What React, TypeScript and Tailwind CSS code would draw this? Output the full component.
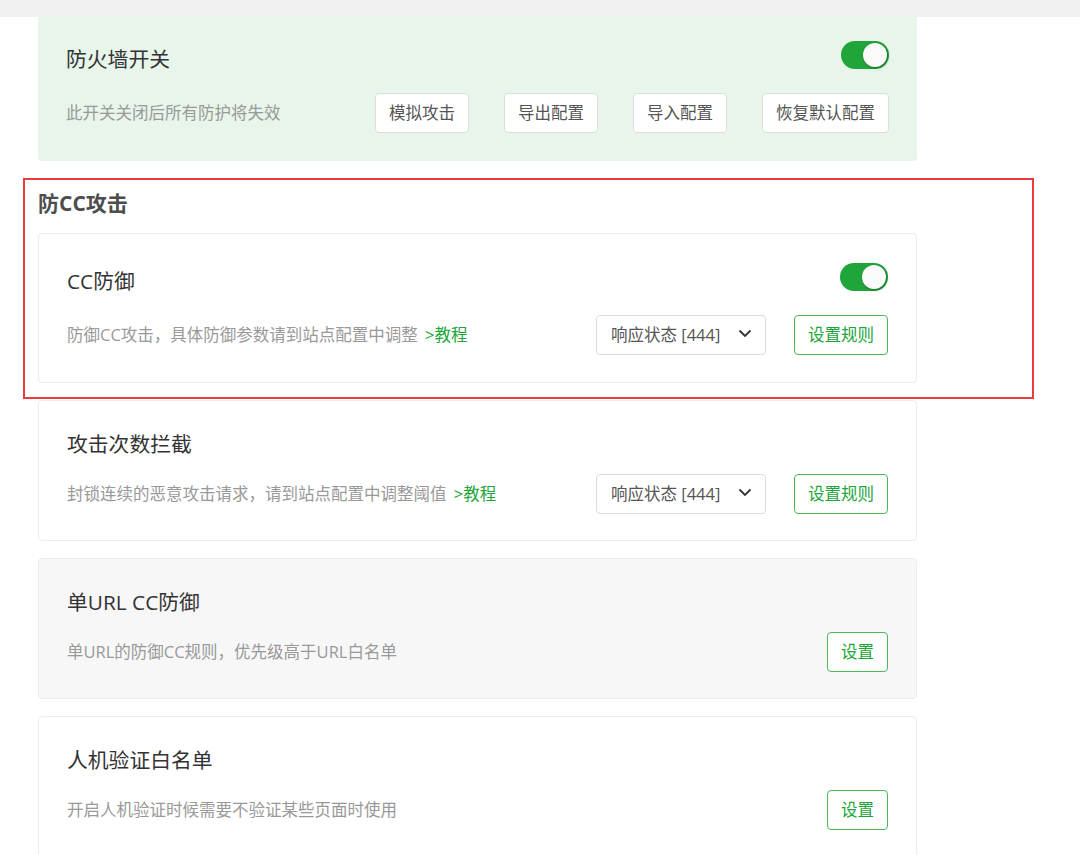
import React from "react";

const FONT = { fontFamily: '"Open Sans", "Noto Sans CJK SC", sans-serif' };

function Toggle() {
  return (
    <div className="relative h-[28px] w-[48px] shrink-0 rounded-full bg-[#20a53a]">
      <div className="absolute right-[2px] top-[2px] h-[24px] w-[24px] rounded-full bg-[#fafafa] shadow-[1px_1px_3px_rgba(0,0,0,0.35)]" />
    </div>
  );
}

function PlainButton({ children }: { children: React.ReactNode }) {
  return (
    <button className="h-[40px] shrink-0 rounded-[4px] border border-[#dcdcdc] bg-white px-[13px] text-[16.5px] text-[#555]">
      {children}
    </button>
  );
}

function GreenButton({ children }: { children: React.ReactNode }) {
  return (
    <button className="h-[40px] shrink-0 rounded-[4px] border border-[#4cb85c] bg-white px-[13px] text-[16.5px] text-[#20a53a]">
      {children}
    </button>
  );
}

function StatusSelect() {
  return (
    <div className="flex h-[40px] w-[170px] shrink-0 items-center justify-between rounded-[4px] border border-[#dcdcdc] bg-white pl-[14px] pr-[13px] text-[16.5px] text-[#555]">
      <span>响应状态 [444]</span>
      <svg width="14" height="9" viewBox="0 0 14 9" className="mb-[4px]">
        <path d="M1.5 1.5 L7 7 L12.5 1.5" fill="none" stroke="#333" strokeWidth="1.8" />
      </svg>
    </div>
  );
}

function Tutorial() {
  return <span className="ml-[3px] text-[#20a53a]"> &gt;教程</span>;
}

type CardProps = {
  title: string;
  desc: React.ReactNode;
  toggle?: boolean;
  actions: React.ReactNode;
  className?: string;
};

function Card({ title, desc, toggle, actions, className = "bg-white border border-[#ececec] rounded-[4px]" }: CardProps) {
  return (
    <div className={`w-[879px] px-[28px] pt-[29px] ${toggle ? "pb-[27px]" : "pb-[26px]"} ${className}`}>
      {toggle ? (
        <div className="flex h-[36px] items-start justify-between">
          <div className="mt-[4px] text-[20.8px] leading-[28px] text-[#333]">{title}</div>
          <Toggle />
        </div>
      ) : (
        <div className="flex h-[28px] items-center">
          <div className="text-[20.8px] leading-[28px] text-[#333]">{title}</div>
        </div>
      )}
      <div className="mt-[16px] flex h-[40px] items-center justify-between">
        <div className="text-[16.5px] text-[#999]">{desc}</div>
        <div className="flex items-center gap-[28px]">{actions}</div>
      </div>
    </div>
  );
}

export default function App() {
  return (
    <div className="relative min-h-[855px] w-[1080px] overflow-hidden bg-white" style={FONT}>
      <div className="h-[17px] w-full bg-[#f0f0f0]" />

      <div className="pl-[38px]">
        {/* firewall master switch */}
        <div className="w-[879px] rounded-b-[4px] bg-[#e7f5ea] px-[28px] pt-[24px] pb-[28px]">
          <div className="flex h-[36px] items-start justify-between">
            <div className="mt-[4px] text-[20.8px] leading-[28px] text-[#333]">防火墙开关</div>
            <Toggle />
          </div>
          <div className="mt-[16px] flex h-[40px] items-center justify-between">
            <div className="text-[16.5px] text-[#999]">此开关关闭后所有防护将失效</div>
            <div className="flex items-center gap-[35px]">
              <PlainButton>模拟攻击</PlainButton>
              <PlainButton>导出配置</PlainButton>
              <PlainButton>导入配置</PlainButton>
              <PlainButton>恢复默认配置</PlainButton>
            </div>
          </div>
        </div>

        <div className="mt-[28px] text-[21px] font-bold leading-[28px] text-[#4d4d4d]">防CC攻击</div>

        <div className="mt-[16px] flex flex-col gap-[17px]">
          <Card
            title="CC防御"
            toggle
            desc={
              <>
                防御CC攻击，具体防御参数请到站点配置中调整
                <Tutorial />
              </>
            }
            actions={
              <>
                <StatusSelect />
                <GreenButton>设置规则</GreenButton>
              </>
            }
          />
          <Card
            title="攻击次数拦截"
            desc={
              <>
                封锁连续的恶意攻击请求，请到站点配置中调整阈值
                <Tutorial />
              </>
            }
            actions={
              <>
                <StatusSelect />
                <GreenButton>设置规则</GreenButton>
              </>
            }
          />
          <Card
            title="单URL CC防御"
            desc="单URL的防御CC规则，优先级高于URL白名单"
            className="bg-[#f7f7f7] border border-[#ececec] rounded-[4px]"
            actions={<GreenButton>设置</GreenButton>}
          />
          <Card
            title="人机验证白名单"
            desc="开启人机验证时候需要不验证某些页面时使用"
            actions={<GreenButton>设置</GreenButton>}
          />
        </div>
      </div>

      {/* highlight frame around the CC section */}
      <div className="pointer-events-none absolute left-[23px] top-[178px] h-[221px] w-[1011px] border-2 border-[#ee3a3a]" />
    </div>
  );
}
